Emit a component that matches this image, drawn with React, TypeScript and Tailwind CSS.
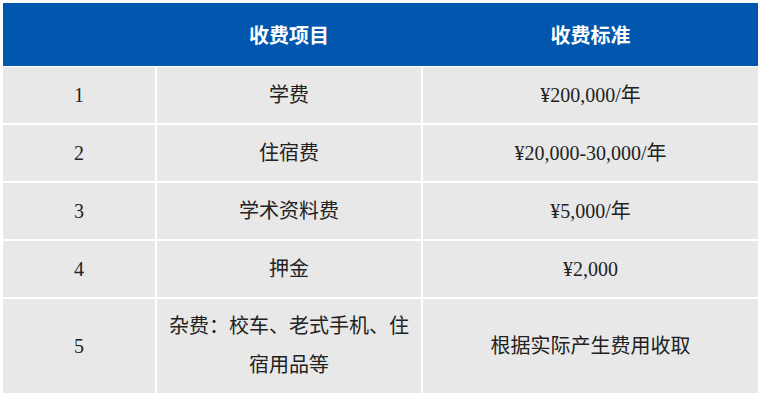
const rows = [
  { no: '1', item: '学费', fee: '¥200,000/年' },
  { no: '2', item: '住宿费', fee: '¥20,000-30,000/年' },
  { no: '3', item: '学术资料费', fee: '¥5,000/年' },
  { no: '4', item: '押金', fee: '¥2,000' },
  { no: '5', item: '杂费：校车、老式手机、住宿用品等', fee: '根据实际产生费用收取' },
];

const cell =
  'bg-[#e8e8e8] flex items-center justify-center text-center px-[10px] py-[8px] leading-[39px] min-h-[56px]';

export default function App() {
  return (
    <div className="min-h-screen bg-white pt-[3px] pl-[3px]">
      <div className="w-[755px] bg-white text-[20px] text-[#222] font-['Liberation_Serif','Noto_Sans_CJK_SC',serif]">
        {/* header */}
        <div className="grid grid-cols-[152px_264px_335px] gap-x-[2px] bg-[#0057ad] h-[63px] text-white font-bold font-['Noto_Sans_CJK_SC',sans-serif]">
          <div />
          <div className="flex items-center justify-center">收费项目</div>
          <div className="flex items-center justify-center">收费标准</div>
        </div>
        <div className="mt-[1px] grid grid-cols-[152px_264px_335px] gap-[2px]">
          {rows.map((r) => (
            <div key={r.no} className="contents">
              <div className={cell}>{r.no}</div>
              <div className={cell}>{r.item}</div>
              <div className={cell}>{r.fee}</div>
            </div>
          ))}
        </div>
      </div>
    </div>
  );
}
